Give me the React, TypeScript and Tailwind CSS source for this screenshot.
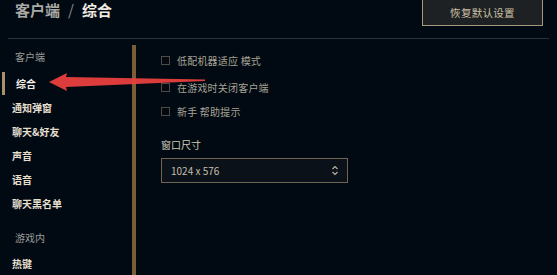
import React from "react";

const font = { fontFamily: '"Noto Sans CJK SC", "Noto Sans", sans-serif' };

const navItems = ["通知弹窗", "聊天&好友", "声音", "语音", "聊天黑名单"];
const options = [
  { label: "低配机器适应 模式", mt: "mt-0" },
  { label: "在游戏时关闭客户端", mt: "mt-[5px]" },
  { label: "新手 帮助提示", mt: "mt-[2px]" },
];

const Checkbox = () => (
  <div className="w-[9px] h-[9px] border border-[#4d4b46] bg-[#05090f]" />
);

const App = () => {
  return (
    <div
      className="relative w-[557px] h-[275px] overflow-hidden bg-[#010a13] flex flex-col"
      style={font}
    >
      {/* Header */}
      <div className="h-[38px] flex items-start justify-between pl-[15px] pr-[14px]">
        <div className="flex items-center h-[19px] text-[15px] leading-none">
          <span className="text-[#a9a9a6] font-bold">客户端</span>
          <span className="text-[#8a8a88] mx-[8px]">/</span>
          <span className="text-[#f0ebe0] font-bold">综合</span>
        </div>
        <button className="-mt-[1px] h-[27px] w-[121px] border border-[#a8987a] bg-[#1e2124] text-[#cfc3a6] text-[10.5px] tracking-[0.3px] flex items-center justify-center">
          恢复默认设置
        </button>
      </div>
      <div className="mx-[8px] h-[1px] bg-[#2c313a]" />

      {/* Body */}
      <div className="flex flex-1">
        <div className="w-[132px] pt-[4px] flex flex-col">
          <div className="h-[26px] flex items-center pl-[15px] text-[10px] text-[#9c9c98]">
            客户端
          </div>
          <div className="relative mt-[2px] h-[24px] flex items-center pl-[16px] text-[10px] font-bold text-[#f4f0e8]">
            <div className="absolute left-[2px] top-[1px] w-[3px] h-[23px] bg-[#a8916c]" />
            综合
          </div>
          {navItems.map((item) => (
            <div
              key={item}
              className="h-[24px] flex items-center pl-[12px] text-[10px] font-bold text-[#e6dfce]"
            >
              {item}
            </div>
          ))}
          <div className="mt-[10px] h-[24px] flex items-center pl-[15px] text-[10px] text-[#9c9c98]">
            游戏内
          </div>
          <div className="mt-[2px] h-[24px] flex items-center pl-[12px] text-[10px] font-bold text-[#e6dfce]">
            热键
          </div>
        </div>

        <div className="w-[4px] mt-[6px] bg-[#7b5e37]" />

        <div className="flex-1 pl-[25px] pt-[10px] flex flex-col">
          {options.map((o) => (
            <div key={o.label} className={`h-[22px] flex items-center gap-[7px] ${o.mt}`}>
              <Checkbox />
              <span className="text-[10px] tracking-[0.2px] text-[#a8a394]">{o.label}</span>
            </div>
          ))}
          <div className="mt-[14px] h-[16px] flex items-center text-[10px] text-[#d2cab8]">
            窗口尺寸
          </div>
          <div className="mt-[6px] w-[187px] h-[25px] border border-[#6f6552] bg-[#0b1118] flex items-center justify-between pl-[9px] pr-[9px]">
            <span className="text-[10px] text-[#c6bfae]">1024 x 576</span>
            <svg width="6" height="11" viewBox="0 0 6 11">
              <path d="M0.5 4 L3 1.5 L5.5 4" stroke="#b8b2a4" strokeWidth="1.2" fill="none" />
              <path d="M0.5 7 L3 9.5 L5.5 7" stroke="#b8b2a4" strokeWidth="1.2" fill="none" />
            </svg>
          </div>
        </div>
      </div>

      {/* Red annotation arrow */}
      <svg
        className="absolute left-[45px] top-[68px]"
        width="165"
        height="28"
        viewBox="0 0 165 28"
      >
        <polygon
          points="4,14 22,5 21,9 160,11.5 160,13 21,19 22,23"
          fill="#e8403e"
          opacity="0.95"
        />
      </svg>
    </div>
  );
};

export default App;
